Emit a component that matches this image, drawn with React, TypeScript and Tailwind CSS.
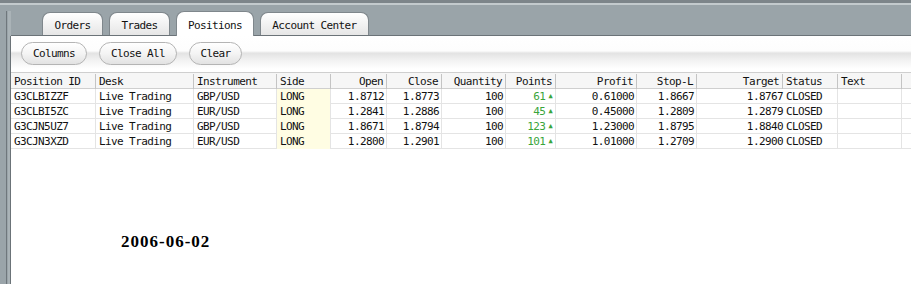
import React from 'react';

interface PositionRow {
  id: string;
  desk: string;
  instrument: string;
  side: string;
  open: string;
  close: string;
  quantity: string;
  points: string;
  profit: string;
  stopLoss: string;
  target: string;
  status: string;
}

const rows: PositionRow[] = [
  { id: 'G3CLBIZZF', desk: 'Live Trading', instrument: 'GBP/USD', side: 'LONG', open: '1.8712', close: '1.8773', quantity: '100', points: '61', profit: '0.61000', stopLoss: '1.8667', target: '1.8767', status: 'CLOSED' },
  { id: 'G3CLBI5ZC', desk: 'Live Trading', instrument: 'EUR/USD', side: 'LONG', open: '1.2841', close: '1.2886', quantity: '100', points: '45', profit: '0.45000', stopLoss: '1.2809', target: '1.2879', status: 'CLOSED' },
  { id: 'G3CJN5UZ7', desk: 'Live Trading', instrument: 'GBP/USD', side: 'LONG', open: '1.8671', close: '1.8794', quantity: '100', points: '123', profit: '1.23000', stopLoss: '1.8795', target: '1.8840', status: 'CLOSED' },
  { id: 'G3CJN3XZD', desk: 'Live Trading', instrument: 'EUR/USD', side: 'LONG', open: '1.2800', close: '1.2901', quantity: '100', points: '101', profit: '1.01000', stopLoss: '1.2709', target: '1.2900', status: 'CLOSED' },
];

const GRID = 'grid grid-cols-[85px_98px_83px_54px_56px_55px_64px_50px_81px_60px_86px_55px_64px]';

const tabs = [
  { label: 'Orders', w: 'w-[61px]' },
  { label: 'Trades', w: 'w-[61px]' },
  { label: 'Positions', w: 'w-[78px]', active: true },
  { label: 'Account Center', w: 'w-[109px]' },
];

const headers: { label: string; right?: boolean }[] = [
  { label: 'Position ID' },
  { label: 'Desk' },
  { label: 'Instrument' },
  { label: 'Side' },
  { label: 'Open', right: true },
  { label: 'Close', right: true },
  { label: 'Quantity', right: true },
  { label: 'Points', right: true },
  { label: 'Profit', right: true },
  { label: 'Stop-L', right: true },
  { label: 'Target', right: true },
  { label: 'Status' },
  { label: 'Text' },
];

const PillButton: React.FC<{ label: string; width: string }> = ({ label, width }) => (
  <button
    className={`${width} h-[23px] rounded-full border border-[#b4b4b4] bg-gradient-to-b from-[#ffffff] via-[#f4f4f4] to-[#e2e2e2] text-[#111] flex items-center justify-center`}
  >
    {label}
  </button>
);

const App: React.FC = () => {
  const cellL = 'pl-[3px] border-r border-[#e4e4e4] whitespace-nowrap overflow-hidden';
  const cellR = 'pr-[2px] text-right border-r border-[#e4e4e4] whitespace-nowrap overflow-hidden';

  return (
    <div className="w-[911px] h-[284px] overflow-hidden bg-white flex flex-col font-['DejaVu_Sans_Mono',monospace] text-[11px] tracking-[-0.6px] leading-[15px] text-[#111]">
      {/* top frame strip */}
      <div className="h-[5px] shrink-0 bg-[#7d858a] border-b-2 border-[#c3cacd]"></div>

      <div className="flex flex-1 min-h-0">
        {/* left frame strip */}
        <div className="w-[11px] shrink-0 bg-[#9aa4a9] flex flex-col">
          <div className="mt-[6px] ml-[6px] flex-1 border-l border-[#6f777c] border-r-[3px] border-r-[#aab3b7]"></div>
        </div>

        <div className="flex-1 flex flex-col min-w-0">
          {/* tab bar */}
          <div className="h-[31px] shrink-0 bg-[#9aa4a9] border-b border-[#6b7378] flex items-end gap-[6px] pl-[31px] relative">
            {tabs.map((t) =>
              t.active ? (
                <div
                  key={t.label}
                  className={`${t.w} h-[25px] -mb-px relative z-10 rounded-t-[8px] border border-b-0 border-[#7f878c] bg-white flex items-center justify-center pt-[2px]`}
                >
                  {t.label}
                </div>
              ) : (
                <div
                  key={t.label}
                  className={`${t.w} h-[23px] rounded-t-[8px] border border-b-0 border-[#7f878c] bg-gradient-to-b from-[#ffffff] to-[#e6e6e6] flex items-center justify-center pt-[2px]`}
                >
                  {t.label}
                </div>
              )
            )}
          </div>

          {/* content panel */}
          <div className="flex-1 flex flex-col border-l border-[#6b7378] -ml-px">
            {/* toolbar */}
            <div className="h-[33px] shrink-0 bg-[linear-gradient(to_bottom,#ffffff_0%,#fdfdfd_45%,#e3e3e3_52%,#f3f3f3_75%,#ffffff_100%)] flex items-center gap-[12px] pl-[10px] pt-[2px]">
              <PillButton label="Columns" width="w-[66px]" />
              <PillButton label="Close All" width="w-[78px]" />
              <PillButton label="Clear" width="w-[53px]" />
            </div>

            {/* grid */}
            <div className="mt-[3px]">
              <div className={`${GRID} h-[17px] bg-[#f6f6f6] border-y border-[#cfcfcf]`}>
                {headers.map((h) => (
                  <div
                    key={h.label}
                    className={`${h.right ? 'text-right pr-[3px]' : 'pl-[3px]'} border-r border-[#c4c4c4] my-[1px] whitespace-nowrap`}
                  >
                    {h.label}
                  </div>
                ))}
              </div>

              {rows.map((r) => (
                <div key={r.id} className={`${GRID} h-[15px] border-b border-[#e4e4e4]`}>
                  <div className={cellL}>{r.id}</div>
                  <div className={cellL}>{r.desk}</div>
                  <div className={cellL}>{r.instrument}</div>
                  <div className={`${cellL} bg-[#fffde3]`}>{r.side}</div>
                  <div className={cellR}>{r.open}</div>
                  <div className={cellR}>{r.close}</div>
                  <div className={cellR}>{r.quantity}</div>
                  <div className={`${cellR} pr-[3px] text-[#39a43a] flex items-center justify-end gap-[3px]`}>
                    <span>{r.points}</span>
                    <span className="text-[7px] leading-[7px]">▲</span>
                  </div>
                  <div className={cellR}>{r.profit}</div>
                  <div className={cellR}>{r.stopLoss}</div>
                  <div className="text-right whitespace-nowrap">{r.target}</div>
                  <div className={`${cellL} pl-[2px]`}>{r.status}</div>
                  <div className={cellL}></div>
                </div>
              ))}
            </div>

            {/* report date */}
            <div className="pl-[110px] pt-[84px] font-['Liberation_Serif',serif] font-bold text-[17px] tracking-[1px] leading-[17px] text-[#000]">
              2006-06-02
            </div>
          </div>
        </div>
      </div>
    </div>
  );
};

export default App;
